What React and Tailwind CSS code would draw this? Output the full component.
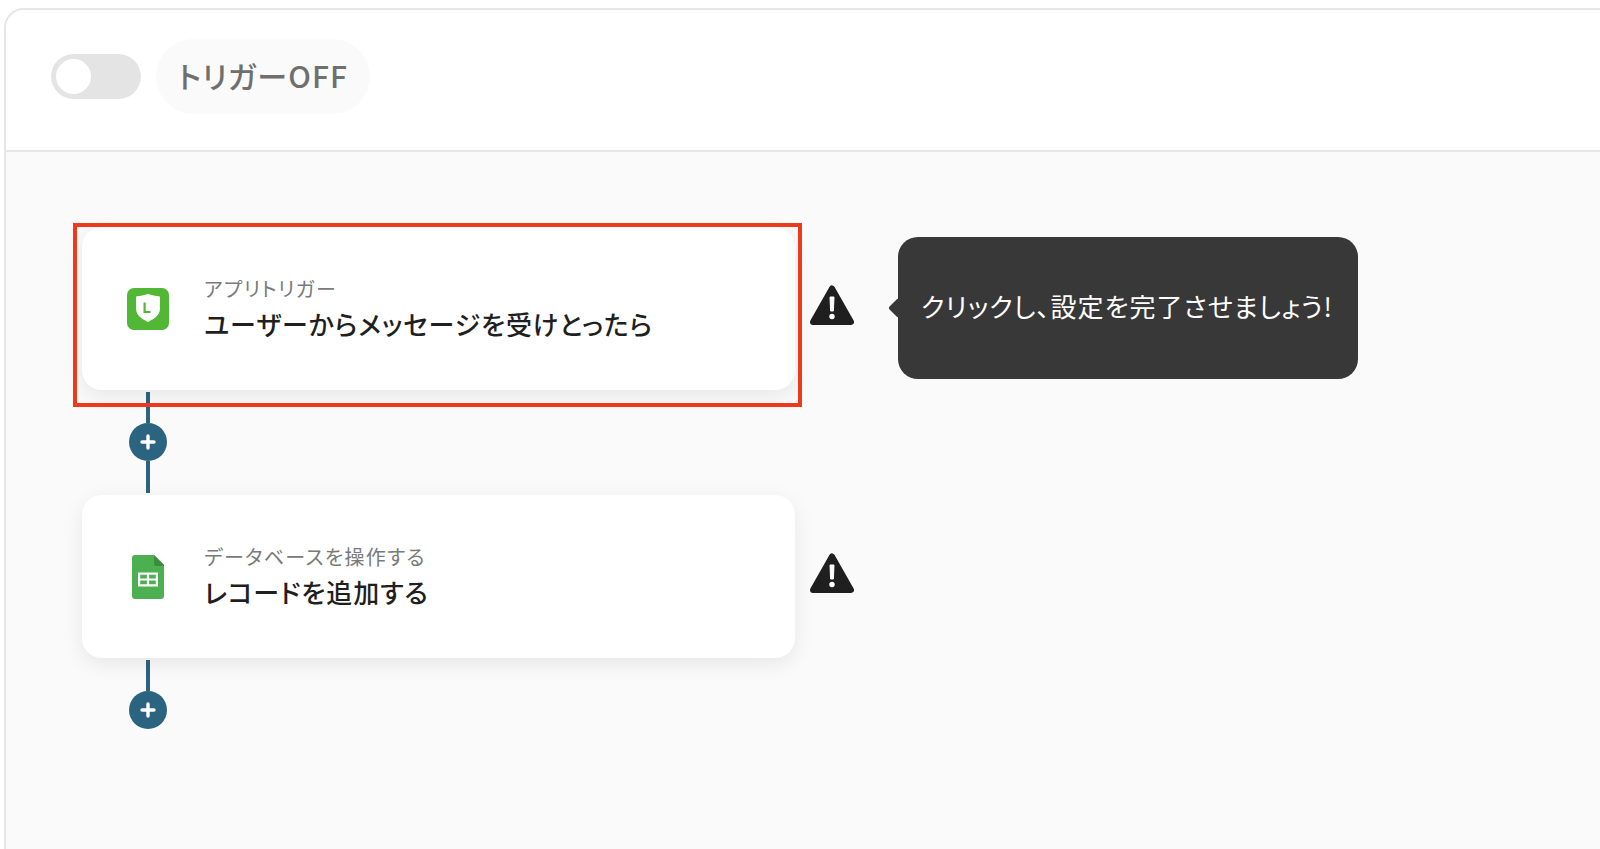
import React from "react";

const font = { fontFamily: '"Noto Sans CJK JP", "Noto Sans", sans-serif' };

function WarningIcon() {
  return (
    <svg width="44" height="40" viewBox="0 0 44 40" className="shrink-0">
      <path d="M22 3.500L41 37H3z" fill="#1f1f1f" stroke="#1f1f1f" strokeWidth="6" strokeLinejoin="round" />
      <path d="M20 12h4l-.6 14h-2.800z" fill="#fff" stroke="#fff" strokeWidth="1" strokeLinejoin="round" />
      <circle cx="22" cy="31.500" r="2.700" fill="#fff" />
    </svg>
  );
}

function LineIcon() {
  return (
    <svg width="42" height="42" viewBox="0 0 42 42">
      <rect width="42" height="42" rx="7" fill="#52b734" />
      <path
        d="M21 6c3.600 1.300 7.800 2 11 2.200 .5 0 .9 .4 .9 .9v11.900c0 5.500-4.400 9.200-11.900 13-7.500-3.800-11.900-7.500-11.900-13V9.100c0-.5 .4-.9 .9-.9 3.200-.2 7.400-.9 11-2.200z"
        fill="#fff"
      />
      <path d="M16.500 14.500h2.200v8.500h4.800v2h-7z" fill="#52b734" />
    </svg>
  );
}

function SheetsIcon() {
  return (
    <svg width="32" height="44" viewBox="0 0 32 44">
      <path d="M3 0h19l10 10v31a3 3 0 0 1-3 3H3a3 3 0 0 1-3-3V3a3 3 0 0 1 3-3z" fill="#4caf50" />
      <path d="M22 0l10 10v1H24a2 2 0 0 1-2-2z" fill="#388e3c" />
      <path
        d="M6 17.500h20v14H6zM8.200 19.700v3.700h6.700v-3.700zm8.900 0v3.700h6.700v-3.700zM8.200 25.600v3.700h6.700v-3.700zm8.900 0v3.700h6.700v-3.700z"
        fill="#fff"
        fillRule="evenodd"
      />
    </svg>
  );
}

function PlusButton() {
  return (
    <div className="w-[38px] h-[38px] rounded-full bg-[#2b6480] flex items-center justify-center shrink-0">
      <svg width="16" height="16" viewBox="0 0 16 16">
        <path d="M8 2v12M2 8h12" stroke="#fff" strokeWidth="3.400" strokeLinecap="round" />
      </svg>
    </div>
  );
}

function Connector({ tail }) {
  return (
    <div className="w-[38px] ml-[123px] pt-[2px] flex flex-col items-center">
      <div className="w-[4px] h-[31px] bg-[#2b6480]" />
      <PlusButton />
      {tail && <div className="w-[4px] h-[32px] mb-[2px] bg-[#2b6480]" />}
    </div>
  );
}

function StepCard({ icon, label, title, highlighted, children }) {
  return (
    <div className="flex items-start">
      <div className="relative w-[713px] h-[163px] ml-[76px] bg-white rounded-[20px] shadow-[0_6px_20px_rgba(0,0,0,0.08)] flex items-center shrink-0">
        <div className="w-[122px] flex justify-center pl-[10px] shrink-0">{icon}</div>
        <div className="flex flex-col [font-feature-settings:'palt']">
          <span className="text-[20px] leading-[28px] tracking-[1.3px] text-[#7a7a7a]">{label}</span>
          <span className="mt-[3px] text-[26px] leading-[36px] tracking-[0.9px] font-medium text-[#1f1f1f]">{title}</span>
        </div>
        {highlighted && (
          <div className="absolute left-[-9px] top-[-4px] w-[729px] h-[184px] border-4 border-[#ee3a1c]" />
        )}
      </div>
      <div className="ml-[15px] mt-[58px]">
        <WarningIcon />
      </div>
      {children}
    </div>
  );
}

export default function App() {
  return (
    <div className="w-[1600px] h-[849px] overflow-hidden bg-white pt-[8px] pl-[4px]" style={font}>
      <div className="w-[1700px] h-[900px] border-2 border-[#e6e6e6] rounded-tl-[20px] bg-[#fafafa] overflow-hidden">
        <div className="h-[142px] bg-white border-b-2 border-[#e6e6e6] flex items-center pl-[45px] pb-[8px] gap-[15px]">
          <div className="w-[90px] h-[45px] rounded-full bg-[#e4e4e4] p-[5px]">
            <div className="w-[35px] h-[35px] rounded-full bg-white" />
          </div>
          <div className="w-[214px] h-[75px] rounded-full bg-[#fafafa] flex items-center justify-center pb-[3px] [font-feature-settings:'palt']">
            <span className="text-[30px] leading-[30px] font-medium tracking-[1.1px] text-[#6f6f6f]">トリガーOFF</span>
          </div>
        </div>
        <div className="pt-[75px]">
          <StepCard icon={<LineIcon />} label="アプリトリガー" title="ユーザーからメッセージを受けとったら" highlighted>
            <div className="relative ml-[44px] mt-[10px] w-[460px] h-[142px] rounded-[20px] bg-[#383838] flex items-center justify-center pb-[5px] pr-[2px]">
              <div className="absolute left-[-7px] top-[64px] w-[14px] h-[14px] rotate-45 rounded-[2px] bg-[#383838]" />
              <span className="relative text-[26px] tracking-[1px] text-white [font-feature-settings:'palt']">クリックし、設定を完了させましょう!</span>
            </div>
          </StepCard>
          <Connector tail />
          <StepCard icon={<SheetsIcon />} label="データベースを操作する" title="レコードを追加する" />
          <Connector />
        </div>
      </div>
    </div>
  );
}
